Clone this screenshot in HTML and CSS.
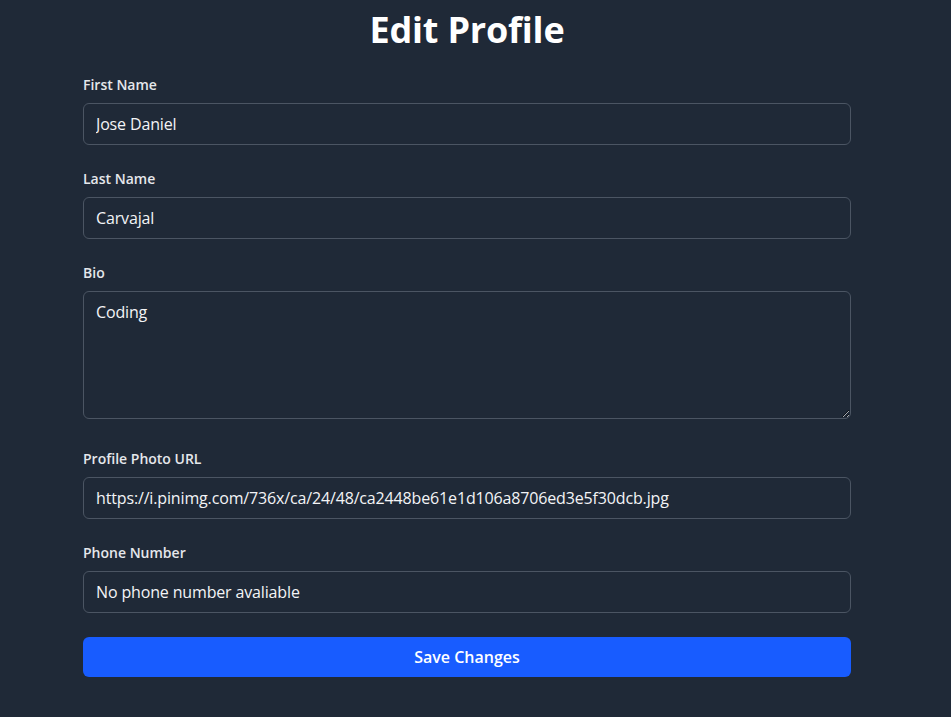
FILE: index.html
```html
<!DOCTYPE html>
<html lang="en">
<head>
<meta charset="utf-8">
<title>Edit Profile</title>
<link rel="stylesheet" href="styles.css">
</head>
<body>
<main class="page">
  <div class="container">
    <h1 class="title">Edit Profile</h1>
    <form class="form">
      <div class="field">
        <label class="label" for="first">First Name</label>
        <input class="input" id="first" type="text" value="Jose Daniel">
      </div>
      <div class="field">
        <label class="label" for="last">Last Name</label>
        <input class="input" id="last" type="text" value="Carvajal">
      </div>
      <div class="field">
        <label class="label" for="bio">Bio</label>
        <textarea class="input textarea" id="bio" rows="4">Coding</textarea>
      </div>
      <div class="field">
        <label class="label" for="photo">Profile Photo URL</label>
        <input class="input" id="photo" type="text" value="https://i.pinimg.com/736x/ca/24/48/ca2448be61e1d106a8706ed3e5f30dcb.jpg">
      </div>
      <div class="field">
        <label class="label" for="phone">Phone Number</label>
        <input class="input" id="phone" type="text" value="No phone number avaliable">
      </div>
      <button class="button" type="button">Save Changes</button>
    </form>
  </div>
</main>
</body>
</html>
```
FILE: styles.css
```css
* { box-sizing: border-box; }
html, body {
  margin: 0;
  padding: 0;
  background: #1f2937;
  font-family: "Open Sans", "Noto Sans", sans-serif;
  color: #f3f4f6;
}
.page {
  min-height: 717px;
  padding: 10px 17px 0 0;
}
.container {
  width: 768px;
  margin: 0 auto;
}
.title {
  margin: 0 0 25px;
  font-size: 36px;
  line-height: 40px;
  font-weight: 700;
  text-align: center;
  color: #ffffff;
  letter-spacing: -0.2px;
}
.form {
  display: flex;
  flex-direction: column;
  gap: 24px;
}
.field {
  display: flex;
  flex-direction: column;
}
.label {
  display: block;
  font-size: 14px;
  line-height: 20px;
  font-weight: 600;
  color: #e5e7eb;
  margin-bottom: 8px;
}
.input {
  display: block;
  width: 100%;
  height: 42px;
  padding: 8px 12px;
  border: 1px solid #4b5563;
  border-radius: 6px;
  background: #1f2937;
  color: #f3f4f6;
  font-family: inherit;
  font-size: 16px;
  line-height: 24px;
  letter-spacing: -0.15px;
  outline: none;
}
.textarea {
  height: 128px;
  resize: vertical;
  margin-bottom: 6px;
}
.button {
  display: block;
  width: 100%;
  height: 40px;
  border: 0;
  border-radius: 6px;
  background: #185cff;
  color: #ffffff;
  font-family: inherit;
  font-size: 16px;
  font-weight: 600;
  cursor: pointer;
}
```
